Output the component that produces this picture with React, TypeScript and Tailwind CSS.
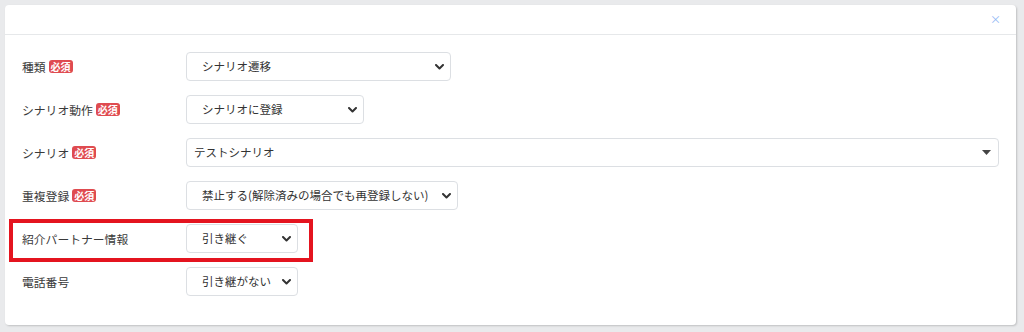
import React from "react";

const font = { fontFamily: '"Noto Sans CJK JP", "Noto Sans", sans-serif' };

function Badge() {
  return (
    <span className="ml-[3px] inline-flex h-[13px] items-center rounded-[3px] bg-[#df4b50] px-[2px] text-[10px] font-bold leading-none text-white">
      必須
    </span>
  );
}

function Chevron() {
  return (
    <svg width="9" height="6" viewBox="0 0 9 6" className="shrink-0">
      <polyline points="1,1 4.5,4.5 8,1" fill="none" stroke="#333" strokeWidth="2" strokeLinecap="round" strokeLinejoin="round" />
    </svg>
  );
}

function FakeSelect({ value, width }: { value: string; width: string }) {
  return (
    <div className={`flex h-[29px] ${width} items-center justify-between rounded-[4px] border border-[#dcdfe3] bg-white pl-[15px] pr-[6px] text-[11.5px] text-[#333]`}>
      <span className="whitespace-nowrap">{value}</span>
      <Chevron />
    </div>
  );
}

function Row({ label, required, children }: { label: string; required?: boolean; children: React.ReactNode }) {
  return (
    <div className="flex items-center">
      <div className="flex w-[164px] shrink-0 items-center text-[11.8px] text-[#3a3a3a]">
        <span>{label}</span>
        {required && <Badge />}
      </div>
      {children}
    </div>
  );
}

export default function App() {
  return (
    <div className="h-[332px] w-[1024px] bg-[#e9eaec] pl-[5px] pt-[5px]" style={font}>
      <div className="w-[1011px] rounded-[4px] bg-white shadow-[1px_1px_2px_rgba(0,0,0,0.18)]">
        {/* header */}
        <div className="flex h-[30px] items-center justify-end border-b border-[#e6e8ea] pr-[15px]">
          <span className="text-[11px] leading-none text-[#8fb8f5]">×</span>
        </div>

        {/* body */}
        <div className="flex flex-col gap-[14px] pb-[29px] pl-[17px] pt-[17px]">
          <Row label="種類" required>
            <FakeSelect value="シナリオ遷移" width="w-[265px]" />
          </Row>
          <Row label="シナリオ動作" required>
            <FakeSelect value="シナリオに登録" width="w-[178px]" />
          </Row>
          <Row label="シナリオ" required>
            <div className="flex h-[29px] w-[813px] items-center justify-between rounded-[4px] border border-[#dcdfe3] bg-white pl-[7px] pr-[7px] text-[11.5px] text-[#333]">
              <span>テストシナリオ</span>
              <svg width="9" height="5" viewBox="0 0 9 5">
                <polygon points="0,0 9,0 4.5,5" fill="#444" />
              </svg>
            </div>
          </Row>
          <Row label="重複登録" required>
            <FakeSelect value="禁止する(解除済みの場合でも再登録しない)" width="w-[272px]" />
          </Row>
          <div className="relative">
            <div className="pointer-events-none absolute left-[-13px] top-[-5px] h-[43px] w-[304px] border-[4px] border-[#e4141f]" />
            <Row label="紹介パートナー情報">
              <FakeSelect value="引き継ぐ" width="w-[112px]" />
            </Row>
          </div>
          <Row label="電話番号">
            <FakeSelect value="引き継がない" width="w-[112px]" />
          </Row>
        </div>
      </div>
    </div>
  );
}
